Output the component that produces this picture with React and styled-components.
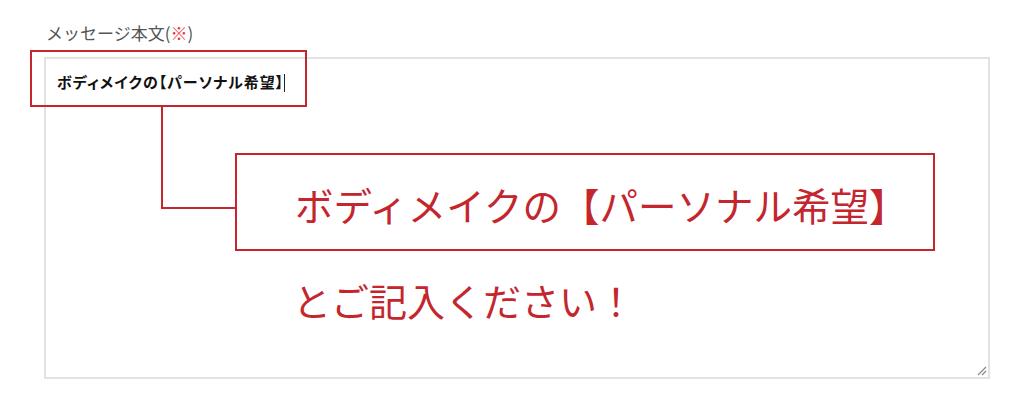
import React from "react";
import styled, { createGlobalStyle } from "styled-components";

const red = "#c4262e";

const GlobalStyle = createGlobalStyle`
    body {
        margin: 0;
        background: #fff;
        font-family: "Noto Sans CJK JP", "Noto Sans", sans-serif;
    }
`;

const Page = styled.div`
    padding: 22px 0 0 44px;
    width: 1024px;
    height: 417px;
    box-sizing: border-box;
`;

const Label = styled.div`
    font-size: 17px;
    line-height: 21px;
    color: #555;
    margin: 0 0 14px 2px;
`;

const Required = styled.span`
    color: #e8343a;
`;

const Field = styled.div`
    position: relative;
    width: 946px;
    height: 322px;
`;

const TextBox = styled.div`
    box-sizing: border-box;
    width: 100%;
    height: 100%;
    border: 2px solid #e2e2e2;
    padding: 13px 11px;
    font-size: 15px;
    line-height: 20px;
    font-weight: 700;
    letter-spacing: 1px;
    color: #111;
    font-feature-settings: "palt";
`;

const Caret = styled.span`
    display: inline-block;
    width: 1px;
    height: 18px;
    background: #222;
    vertical-align: -4px;
`;

const Grip = styled.svg`
    position: absolute;
    right: 3px;
    bottom: 3px;
`;

// annotation drawn over the textarea
const Overlay = styled.div`
    position: absolute;
    inset: -7px auto auto -14px;
    display: flex;
    flex-direction: column;
    align-items: flex-start;
`;

const SmallFrame = styled.div`
    box-sizing: border-box;
    width: 277px;
    height: 57px;
    border: 2px solid ${red};
`;

const Row = styled.div`
    display: flex;
    align-items: flex-start;
    padding-left: 131px;
`;

const Connector = styled.div`
    box-sizing: border-box;
    width: 74px;
    height: 102px;
    border-left: 2px solid ${red};
    border-bottom: 2px solid ${red};
`;

const BigFrame = styled.div`
    box-sizing: border-box;
    width: 700px;
    height: 98px;
    margin-top: 46px;
    border: 2px solid ${red};
    display: flex;
    align-items: center;
    padding: 4px 0 0 58px;
`;

const BigText = styled.div`
    font-size: 38.5px;
    line-height: 44px;
    color: ${red};
    white-space: nowrap;
`;

const Note = styled(BigText)`
    margin: 27px 0 0 263px;
    font-size: 38px;
`;

function App() {
    return (
        <Page>
            <GlobalStyle />
            <Label>
                メッセージ本文(<Required>※</Required>)
            </Label>
            <Field>
                <TextBox>
                    ボディメイクの【パーソナル希望】
                    <Caret />
                </TextBox>
                <Grip width="10" height="10" viewBox="0 0 10 10">
                    <path d="M1 9 L9 1 M5 9 L9 5" stroke="#888" strokeWidth="1.2" />
                </Grip>
                <Overlay>
                    <SmallFrame />
                    <Row>
                        <Connector />
                        <BigFrame>
                            <BigText>ボディメイクの【パーソナル希望】</BigText>
                        </BigFrame>
                    </Row>
                    <Note>とご記入ください！</Note>
                </Overlay>
            </Field>
        </Page>
    );
}

export default App;
